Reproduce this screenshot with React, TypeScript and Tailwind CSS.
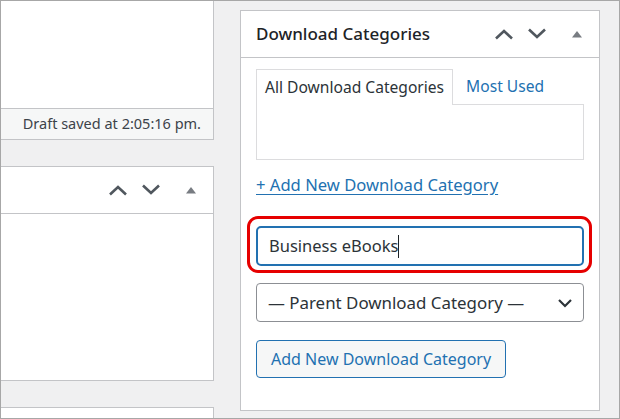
import React from "react";

const font = { fontFamily: '"Noto Sans", "Open Sans", sans-serif' };

function Up() {
  return (
    <svg width="20" height="12" viewBox="0 0 20 12" className="block">
      <polyline points="2,10.5 10,3 18,10.5" fill="none" stroke="#50575e" strokeWidth="2.6" />
    </svg>
  );
}
function Down() {
  return (
    <svg width="20" height="12" viewBox="0 0 20 12" className="block">
      <polyline points="2,1.5 10,9 18,1.5" fill="none" stroke="#50575e" strokeWidth="2.6" />
    </svg>
  );
}
function Tri() {
  return (
    <svg width="12" height="8" viewBox="0 0 12 8" className="block">
      <polygon points="1,7.5 6,1 11,7.5" fill="#787c82" />
    </svg>
  );
}

function Controls() {
  return (
    <div className="flex items-center">
      <Up />
      <div className="w-[13px]" />
      <Down />
      <div className="w-[24px]" />
      <Tri />
    </div>
  );
}

export default function App() {
  return (
    <div
      className="w-[620px] h-[419px] border border-[#a7a7a7] bg-[#f0f0f1] flex overflow-hidden text-[#1d2327]"
      style={font}
    >
      {/* Left column */}
      <div className="w-[213px] flex flex-col shrink-0">
        <div className="h-[107px] bg-white border-r border-[#c3c4c7]" />
        <div className="h-[32px] bg-[#f6f7f7] border-y border-r border-[#c3c4c7] flex items-center justify-end pr-[12px] text-[14.5px] text-[#3c434a]">
          Draft saved at 2:05:16 pm.
        </div>
        <div className="h-[26px]" />
        <div className="h-[215px] bg-white border-y border-r border-[#c3c4c7] flex flex-col">
          <div className="h-[47px] border-b border-[#c3c4c7] flex items-center justify-end pr-[16px]">
            <Controls />
          </div>
        </div>
        <div className="h-[26px]" />
        <div className="flex-1 bg-white border-t border-r border-[#c3c4c7]" />
      </div>

      <div className="w-[26px] shrink-0" />

      {/* Right column */}
      <div className="w-[360px] shrink-0 pt-[9px]">
        <div className="h-[401px] bg-white border border-[#c3c4c7] flex flex-col">
          <div className="h-[47px] border-b border-[#c3c4c7] flex items-center justify-between pl-[15px] pr-[16px]">
            <span className="text-[17px] font-medium text-[#1d2327]">Download Categories</span>
            <Controls />
          </div>
          <div className="px-[15px] pt-[11px] flex flex-col">
            {/* Tabs */}
            <div className="flex items-end">
              <div className="h-[36px] px-[8px] border border-b-0 border-[#dcdcde] bg-white flex items-center text-[15.6px] text-[#2c3338] relative z-10">
                All Download Categories
              </div>
              <div className="h-[36px] px-[13px] flex items-center text-[15.6px] text-[#2271b1]">
                Most Used
              </div>
            </div>
            <div className="h-[56px] border border-[#dcdcde] -mt-px" />
            <div className="mt-[13px] h-[24px] flex items-center">
              <span className="text-[16.6px] text-[#2271b1] underline underline-offset-[3px]">
                + Add New Download Category
              </span>
            </div>
            {/* Input with highlight */}
            <div className="mt-[29px] relative">
              <div className="h-[40px] border-2 border-[#2271b1] rounded-[5px] flex items-center pl-[11px] text-[16.5px] text-[#2c3338]">
                <span>Business eBooks</span>
                <span className="inline-block w-px h-[23px] bg-[#1d2327]" />
              </div>
              <div className="absolute -left-[9px] -right-[8px] -top-[10px] -bottom-[7px] border-[3px] border-[#e60000] rounded-[11px] pointer-events-none" />
            </div>
            {/* Select */}
            <div className="mt-[17px] h-[39px] border border-[#8c8f94] rounded-[4px] flex items-center justify-between pl-[11px] pr-[10px] text-[16.9px] text-[#2c3338]">
              <span>— Parent Download Category —</span>
              <svg width="16" height="10" viewBox="0 0 16 10" className="block">
                <polyline points="2,2 8,8 14,2" fill="none" stroke="#2c3338" strokeWidth="2.2" />
              </svg>
            </div>
            {/* Button */}
            <div className="mt-[18px] flex">
              <div className="h-[38px] px-[14px] border border-[#2271b1] rounded-[4px] bg-[#f6f7f7] flex items-center text-[16px] text-[#2271b1]">
                Add New Download Category
              </div>
            </div>
          </div>
        </div>
      </div>
    </div>
  );
}
